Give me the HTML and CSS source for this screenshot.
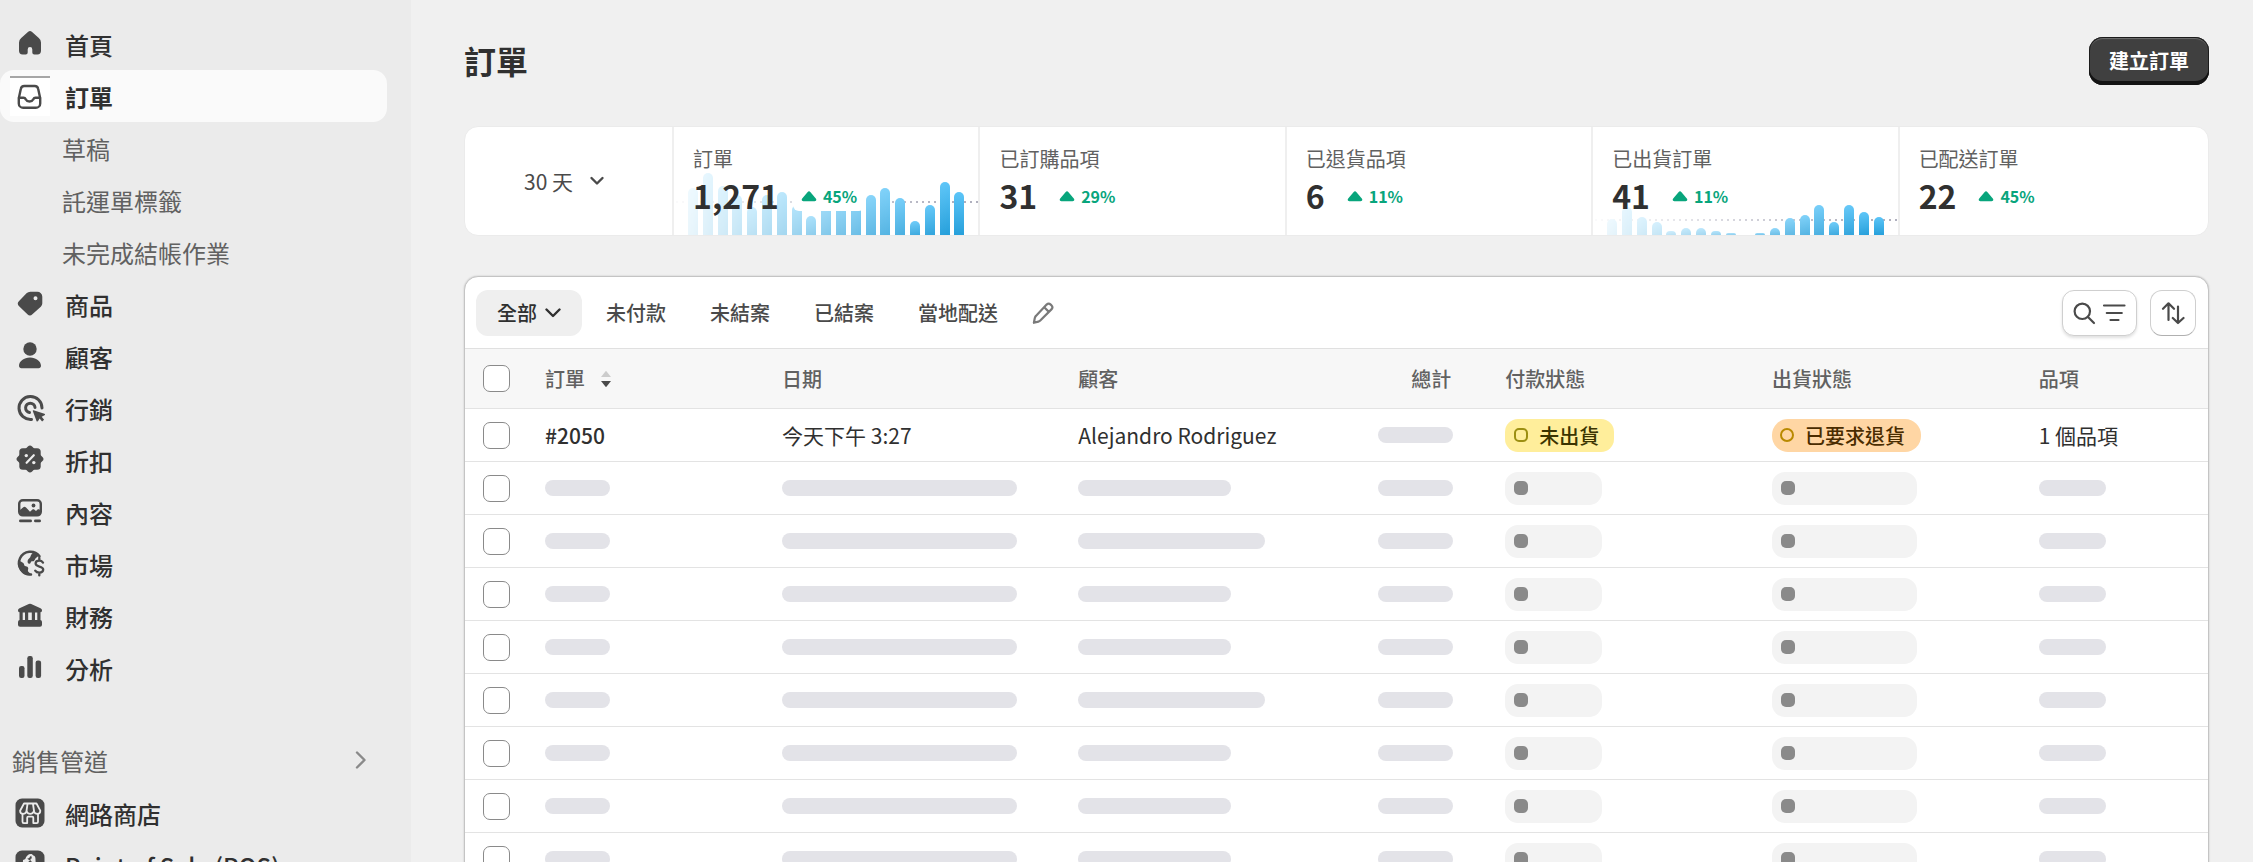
FILE: index.html
```html
<!DOCTYPE html>
<html lang="zh-Hant">
<head>
<meta charset="utf-8">
<title>訂單</title>
<link rel="stylesheet" href="styles.css">
</head>
<body>
<div class="shell">
  <aside class="sidebar">
    <nav>
      <ul class="nav">
        <li><a class="nav-item" href="#"><span class="nav-icon"><svg viewBox="0 0 30 30"><path d="M13.2 3.7a2.8 2.8 0 0 1 3.6 0l7 6.3a6 6 0 0 1 2.2 4.6v8.2a3.6 3.6 0 0 1-3.6 3.6h-3.1a2 2 0 0 1-2-2v-3a2.3 2.3 0 0 0-4.6 0v3a2 2 0 0 1-2 2H7.6A3.6 3.6 0 0 1 4 22.8v-8.2A6 6 0 0 1 6.2 10z"/></svg></span>首頁</a></li>
        <li><a class="nav-item selected" href="#" aria-current="page"><span class="nav-icon"><svg viewBox="0 0 30 30" class="line"><path d="M9.3 4h10.4c1.8 0 3.2 1.2 3.5 3l2 9.2v5.2a4.4 4.4 0 0 1-4.4 4.4H8.2a4.4 4.4 0 0 1-4.4-4.4v-5.2l2-9.2c.3-1.8 1.7-3 3.500-3z"/><path d="M4 15.8h4.600c1.300 0 1.800.8 2.300 1.800.6 1.300 1.700 1.900 3.600 1.900s3-.6 3.600-1.900c.5-1 1-1.800 2.300-1.800H25"/></svg></span>訂單</a>
          <ul class="subnav">
            <li><a href="#">草稿</a></li>
            <li><a href="#">託運單標籤</a></li>
            <li><a href="#">未完成結帳作業</a></li>
          </ul>
        </li>
        <li><a class="nav-item" href="#"><span class="nav-icon"><svg viewBox="0 0 30 30"><path fill-rule="evenodd" d="M15.500 3.700h6.800a5 5 0 0 1 5 5v6.400c0 1.400-.5 2.600-1.500 3.600l-8.400 7.600a3.600 3.600 0 0 1-5 0l-8.300-8a3.600 3.600 0 0 1 0-5.200l7.400-7.800a5.400 5.400 0 0 1 4-1.600zM20.500 8.300a2 2 0 1 0 0 4 2 2 0 0 0 0-4z"/></svg></span>商品</a></li>
        <li><a class="nav-item" href="#"><span class="nav-icon"><svg viewBox="0 0 30 30"><circle cx="15" cy="9" r="6.700"/><path d="M4 25.800C4 21 9 17.400 15 17.400S26 21 26 25.800c0 1.500-1 2.400-2.400 2.400H6.400C5 28.200 4 27.300 4 25.800z"/></svg></span>顧客</a></li>
        <li><a class="nav-item" href="#"><span class="nav-icon"><svg viewBox="0 0 30 30"><g fill="none" stroke="#4a4a4a" stroke-width="3" stroke-linecap="round"><path d="M27 16A11.500 11.500 0 1 0 16.500 27.400"/><path d="M20 15.400A4.700 4.700 0 1 0 14.500 20.500"/></g><path d="M18.600 18.200l10.800 3.500c.9.3.9 1.200.1 1.600l-2.800 1.400 2.400 3.100-2 1.700-2.500-3.100-1.500 2.700c-.4.7-1.400.6-1.600-.2l-3.700-9.900c-.2-.5.3-1 .8-.8z"/></svg></span>行銷</a></li>
        <li><a class="nav-item" href="#"><span class="nav-icon"><svg viewBox="0 0 30 30"><rect x="4.300" y="4.300" width="21.400" height="21.400" rx="3.500"/><rect x="4.700" y="4.700" width="20.600" height="20.600" rx="3" transform="rotate(45 15 15)"/><g class="knock"><circle cx="11.300" cy="11.600" r="1.700"/><circle cx="18.800" cy="18.600" r="1.700"/></g><path class="knock-line" d="M11.600 18.800l7.200-7.600"/></svg></span>折扣</a></li>
        <li><a class="nav-item" href="#"><span class="nav-icon"><svg viewBox="0 0 30 30"><rect x="4.200" y="4.200" width="21.600" height="15.200" rx="3.600" fill="none" stroke="#4a4a4a" stroke-width="2.400"/><path d="M5 14l3-2.600c1-.8 2-.8 3 0l4 4.300 2.200-2c.7-.6 1.600-.6 2.300 0L21 15l1.300-1.200c.8-.6 1.600-.6 2.400 0l.8.700v1.500a3 3 0 0 1-3 3H8a3 3 0 0 1-3-3z"/><circle cx="18.500" cy="9.500" r="1.900"/><rect x="4" y="23.500" width="13" height="2.800" rx="1.400"/><rect x="19" y="23.500" width="7" height="2.800" rx="1.400"/></svg></span>內容</a></li>
        <li><a class="nav-item" href="#"><span class="nav-icon"><svg viewBox="0 0 30 30"><path d="M24.500 8.300A11.400 11.400 0 1 0 16 26.500" fill="none" stroke="#4a4a4a" stroke-width="2.500" stroke-linecap="round"/><path d="M3.500 12c1.500 1.600 3.300 1.700 4.800 3 1 .9.600 2.300 1.700 3.100 1 .7 2.400.4 3 1.400.8 1.300-.4 2.300 0 3.700.4 1.300 2.500 1.600 3.200 3.800C10 28 4 23.500 3.300 17z"/><path d="M19 4l5.500 3-3.800 3.300c-.9.8-.8 2-1.800 2.700-1 .7-1.600-.3-2.600.4-.9.700-.6 2.500-2 2.400-1.500 0-2-2-1.600-3.300.4-1.500 1.800-2 2.500-3.300.8-1.500.5-2.800 3.800-5.200z"/><path d="M28 14.600c-1-1.400-2.300-1.900-3.900-1.900-2 0-3.500 1-3.500 2.900 0 4 7.600 1.900 7.600 6 0 2-1.600 3-3.800 3-1.800 0-3.300-.6-4.200-2M24.300 10v2.600M24.300 24.700v2.700" fill="none" stroke="#4a4a4a" stroke-width="2.300" stroke-linecap="round"/></svg></span>市場</a></li>
        <li><a class="nav-item" href="#"><span class="nav-icon"><svg viewBox="0 0 30 30"><path d="M13.800 4a2.600 2.600 0 0 1 2.400 0l9.300 4.300c1 .5 1.500 1.200 1.500 2.200 0 1.200-.9 2-2 2H5c-1.100 0-2-.8-2-2 0-1 .5-1.700 1.500-2.200zM4.500 12h3.200v9H4.500zM10 12h3.200v9H10zM22.300 12h3.200v9h-3.200zM16.800 12H20v9h-3.200z"/><rect x="3" y="20" width="24" height="6.700" rx="2"/></svg></span>財務</a></li>
        <li><a class="nav-item" href="#"><span class="nav-icon"><svg viewBox="0 0 30 30"><rect x="4" y="14" width="5.500" height="12" rx="2.200"/><rect x="12.300" y="4" width="5.500" height="22" rx="2.200"/><rect x="20.600" y="8.600" width="5.500" height="17.400" rx="2.200"/></svg></span>分析</a></li>
      </ul>
      <button class="section" type="button">銷售管道<svg viewBox="0 0 12 20"><path d="M2 2.500l7.500 7.500L2 17.500"/></svg></button>
      <ul class="nav channels">
        <li><a class="nav-item" href="#"><span class="nav-icon"><svg viewBox="0 0 30 30"><rect x=".5" y=".5" width="29" height="29" rx="6.500"/><g fill="none" stroke="#ebebeb" stroke-width="1.800" stroke-linejoin="round" stroke-linecap="round"><path d="M9 5.500h12.500l3.800 7.200c0 1.900-1.200 3.100-3 3.100-1.700 0-2.900-1.100-3.500-2.500-.6 1.400-1.900 2.500-3.600 2.500s-3-1.100-3.600-2.500c-.6 1.400-1.800 2.500-3.500 2.500-1.800 0-3-1.200-3-3.100z"/><path d="M12.500 6l-1 7M18 6l1 7"/><path d="M7.500 16.500v7.300c0 .8.500 1.300 1.300 1.300h3.400v-5.300c0-.7.400-1.100 1.100-1.100h3.900c.7 0 1.100.4 1.100 1.100v5.300h3.400c.8 0 1.300-.5 1.300-1.300v-7.300"/></g></svg></span>網路商店</a></li>
        <li><a class="nav-item" href="#"><span class="nav-icon"><svg viewBox="0 0 30 30"><rect x=".5" y=".5" width="29" height="29" rx="6.500"/><path class="knock" d="M8 10c1-.4 1.800-.7 2.300-1 .8-3 3-5 5.500-5 1.200 0 2 .7 2.500 1.600 1.200 0 1.900 1.100 2.100 2.300l.8 15.600-13.700 1.500z"/><path d="M22 8l1.800 1.400L25 22l-3 1zM12.200 8.700l2-.7c.3-1 1-1.800 2-2.300l.7 2.500-1.500.8.400 1.700c-1.700 0-2.700 1-2.700 2.300 0 1.800 3 2 3 4.400 0 1.500-1.500 2.200-3.500 1l-.4 1.800c3 1.700 6.200.3 6.200-2.900 0-3-3-3.200-3-4.500 0-.7.800-1 2-.7z"/></svg></span>Point of Sale (POS)</a></li>
      </ul>
    </nav>
  </aside>

  <main class="main">
    <header class="page-head">
      <h1>訂單</h1>
      <button class="primary" type="button">建立訂單</button>
    </header>

    <section class="stats">
      <button class="period" type="button">30 天<svg class="chev" viewBox="0 0 16 16"><path d="M2.500 5l5.500 5.500L13.500 5"/></svg></button>
      <div class="stat">
        <div class="chart avg-high"><i style="height:47px"></i><i style="height:62px"></i><i style="height:49px"></i><i style="height:40px"></i><i style="height:28px"></i><i style="height:40px"></i><i style="height:43px"></i><i style="height:30px"></i><i style="height:19px"></i><i style="height:33px"></i><i style="height:36px"></i><i style="height:38px"></i><i style="height:40px"></i><i style="height:47px"></i><i style="height:37px"></i><i style="height:14px"></i><i style="height:30px"></i><i style="height:53px"></i><i style="height:43px"></i></div>
        <div class="stat-body"><h2>訂單</h2><p><strong>1,271</strong><span class="delta"><svg viewBox="0 0 16 11"><path d="M6.500 1.200a2 2 0 0 1 3 0l5.300 6.300c1 1.300.5 2.800-1.200 2.800H2.400C.7 10.300.2 8.800 1.200 7.500z"/></svg>45%</span></p></div>
      </div>
      <div class="stat">
        <div class="stat-body"><h2>已訂購品項</h2><p><strong>31</strong><span class="delta"><svg viewBox="0 0 16 11"><path d="M6.500 1.200a2 2 0 0 1 3 0l5.300 6.300c1 1.300.5 2.800-1.200 2.800H2.400C.7 10.300.2 8.800 1.200 7.500z"/></svg>29%</span></p></div>
      </div>
      <div class="stat">
        <div class="stat-body"><h2>已退貨品項</h2><p><strong>6</strong><span class="delta"><svg viewBox="0 0 16 11"><path d="M6.500 1.200a2 2 0 0 1 3 0l5.300 6.300c1 1.300.5 2.800-1.200 2.800H2.400C.7 10.300.2 8.800 1.200 7.500z"/></svg>11%</span></p></div>
      </div>
      <div class="stat">
        <div class="chart avg-low"><i style="height:16px"></i><i style="height:28px"></i><i style="height:18px"></i><i style="height:13px"></i><i style="height:4px"></i><i style="height:7px"></i><i style="height:7px"></i><i style="height:4px"></i><i style="height:2px"></i><i style="height:0px"></i><i style="height:2px"></i><i style="height:7px"></i><i style="height:17px"></i><i style="height:20px"></i><i style="height:30px"></i><i style="height:13px"></i><i style="height:30px"></i><i style="height:23px"></i><i style="height:18px"></i></div>
        <div class="stat-body"><h2>已出貨訂單</h2><p><strong>41</strong><span class="delta"><svg viewBox="0 0 16 11"><path d="M6.500 1.200a2 2 0 0 1 3 0l5.300 6.300c1 1.300.5 2.800-1.200 2.800H2.400C.7 10.300.2 8.800 1.200 7.500z"/></svg>11%</span></p></div>
      </div>
      <div class="stat">
        <div class="stat-body"><h2>已配送訂單</h2><p><strong>22</strong><span class="delta"><svg viewBox="0 0 16 11"><path d="M6.500 1.200a2 2 0 0 1 3 0l5.300 6.300c1 1.300.5 2.800-1.200 2.800H2.400C.7 10.300.2 8.800 1.200 7.500z"/></svg>45%</span></p></div>
      </div>
    </section>

    <section class="card">
      <div class="toolbar">
        <div class="tabs">
          <button class="tab active" type="button">全部<svg class="chev" viewBox="0 0 16 16"><path d="M1.500 4.500L8 11l6.500-6.500"/></svg></button>
          <button class="tab" type="button">未付款</button>
          <button class="tab" type="button">未結案</button>
          <button class="tab" type="button">已結案</button>
          <button class="tab" type="button">當地配送</button>
          <button class="edit" type="button" aria-label="編輯"><svg viewBox="0 0 24 24"><path d="M15.600 3.600a2.900 2.900 0 0 1 4.100 0l.7.700a2.900 2.900 0 0 1 0 4.100L9.300 19.500c-.5.500-1.200.9-1.900 1.100L2.900 21.800l.9-4.800c.2-.8.500-1.500 1.100-2.100zM13.200 6.200l4.700 4.700"/></svg></button>
        </div>
        <div class="actions">
          <button class="tool" type="button" aria-label="搜尋和篩選"><svg viewBox="0 0 24 24"><circle cx="10.300" cy="10.300" r="7.700"/><path d="M16 16l6 6"/></svg><svg viewBox="0 0 24 24"><path d="M2 4.500h20.500M4.800 12h15M8.500 19h8"/></svg></button>
          <button class="tool tool-sort" type="button" aria-label="排序"><svg viewBox="0 0 24 24"><path d="M7.500 19V2.500M2 7.800l5.500-5.500 5.500 5.500M17 5.500v16M11.800 17l5.200 5 5.500-5"/></svg></button>
        </div>
      </div>
      <table>
        <colgroup><col class="c-check"><col class="c-order"><col class="c-date"><col class="c-customer"><col class="c-total"><col class="c-status"><col class="c-status"><col></colgroup>
        <thead>
          <tr>
            <th><input type="checkbox" aria-label="全選"></th>
            <th><button class="sort" type="button">訂單<svg viewBox="0 0 12 18"><path class="up" d="M6 .8l5 6.200H1z"/><path d="M1 11h10l-5 6.200z"/></svg></button></th>
            <th>日期</th><th>顧客</th><th class="num">總計</th><th>付款狀態</th><th>出貨狀態</th><th>品項</th>
          </tr>
        </thead>
        <tbody>
          <tr>
            <td><input type="checkbox" aria-label="#2050"></td>
            <td><a class="order" href="#">#2050</a></td>
            <td>今天下午 3:27</td>
            <td>Alejandro Rodriguez</td>
            <td><span class="bone bone-total"></span></td>
            <td><span class="badge yellow">未出貨</span></td>
            <td><span class="badge orange">已要求退貨</span></td>
            <td>1 個品項</td>
          </tr>
          <tr><td><input type="checkbox" aria-label="選取"></td><td><span class="bone bone-order"></span></td><td><span class="bone bone-date"></span></td><td><span class="bone bone-name"></span></td><td><span class="bone bone-total"></span></td><td><span class="badge blank"></span></td><td><span class="badge blank wide"></span></td><td><span class="bone bone-items"></span></td></tr>
          <tr><td><input type="checkbox" aria-label="選取"></td><td><span class="bone bone-order"></span></td><td><span class="bone bone-date"></span></td><td><span class="bone bone-name long"></span></td><td><span class="bone bone-total"></span></td><td><span class="badge blank"></span></td><td><span class="badge blank wide"></span></td><td><span class="bone bone-items"></span></td></tr>
          <tr><td><input type="checkbox" aria-label="選取"></td><td><span class="bone bone-order"></span></td><td><span class="bone bone-date"></span></td><td><span class="bone bone-name"></span></td><td><span class="bone bone-total"></span></td><td><span class="badge blank"></span></td><td><span class="badge blank wide"></span></td><td><span class="bone bone-items"></span></td></tr>
          <tr><td><input type="checkbox" aria-label="選取"></td><td><span class="bone bone-order"></span></td><td><span class="bone bone-date"></span></td><td><span class="bone bone-name"></span></td><td><span class="bone bone-total"></span></td><td><span class="badge blank"></span></td><td><span class="badge blank wide"></span></td><td><span class="bone bone-items"></span></td></tr>
          <tr><td><input type="checkbox" aria-label="選取"></td><td><span class="bone bone-order"></span></td><td><span class="bone bone-date"></span></td><td><span class="bone bone-name long"></span></td><td><span class="bone bone-total"></span></td><td><span class="badge blank"></span></td><td><span class="badge blank wide"></span></td><td><span class="bone bone-items"></span></td></tr>
          <tr><td><input type="checkbox" aria-label="選取"></td><td><span class="bone bone-order"></span></td><td><span class="bone bone-date"></span></td><td><span class="bone bone-name"></span></td><td><span class="bone bone-total"></span></td><td><span class="badge blank"></span></td><td><span class="badge blank wide"></span></td><td><span class="bone bone-items"></span></td></tr>
          <tr><td><input type="checkbox" aria-label="選取"></td><td><span class="bone bone-order"></span></td><td><span class="bone bone-date"></span></td><td><span class="bone bone-name"></span></td><td><span class="bone bone-total"></span></td><td><span class="badge blank"></span></td><td><span class="badge blank wide"></span></td><td><span class="bone bone-items"></span></td></tr>
          <tr><td><input type="checkbox" aria-label="選取"></td><td><span class="bone bone-order"></span></td><td><span class="bone bone-date"></span></td><td><span class="bone bone-name"></span></td><td><span class="bone bone-total"></span></td><td><span class="badge blank"></span></td><td><span class="badge blank wide"></span></td><td><span class="bone bone-items"></span></td></tr>
        </tbody>
      </table>
    </section>
  </main>
</div>
</body>
</html>
```

FILE: styles.css
```css
*, *::before { box-sizing: border-box; }

body {
  margin: 0;
  background: #f0f0f0;
  color: #303030;
  font-family: "Noto Sans CJK TC", "Noto Sans", sans-serif;
  font-size: 21px;
}

button {
  border: 0;
  padding: 0;
  background: none;
  color: inherit;
  font: inherit;
}

a { color: inherit; text-decoration: none; }
ul { margin: 0; padding: 0; list-style: none; }
h1, h2, p { margin: 0; }
svg { display: block; flex: none; }

.shell {
  display: flex;
  height: 100vh;
  overflow: hidden;
}

/* Sidebar */
.sidebar {
  flex: 0 0 411px;
  padding-top: 18px;
  background: #ebebeb;
  overflow: hidden;
}

.nav-item {
  display: flex;
  align-items: center;
  gap: 15px;
  height: 52px;
  margin-right: 24px;
  padding-left: 10px;
  border-radius: 14px;
  font-size: 24px;
  font-weight: 500;
}

.nav-icon {
  display: flex;
  justify-content: center;
  width: 40px;
  height: 40px;
  padding-top: 4px;
}

.nav-icon svg { width: 30px; height: 30px; fill: #4a4a4a; }
.nav-icon svg.line { fill: none; stroke: #4a4a4a; stroke-width: 2.4; stroke-linejoin: round; stroke-linecap: round; }
.nav-icon .knock { fill: #ebebeb; }
.nav-icon .knock-line { stroke: #ebebeb; stroke-width: 2.2; stroke-linecap: round; }

.selected { background: #fafafa; font-weight: 700; }
.selected .nav-icon { background: #fff; border-top: 2px solid #a6a6a6; }

.subnav a {
  display: flex;
  align-items: center;
  height: 52px;
  padding-left: 62px;
  color: #616161;
  font-size: 24px;
}

.section {
  display: flex;
  align-items: center;
  justify-content: space-between;
  width: 100%;
  height: 54px;
  margin-top: 39px;
  padding: 0 44px 0 12px;
  color: #616161;
  font-size: 24px;
}

.section svg { width: 12px; height: 20px; fill: none; stroke: #8a8a8a; stroke-width: 2.4; stroke-linecap: round; stroke-linejoin: round; }

.channels .nav-icon { padding-top: 5px; }

/* Page */
.main {
  flex: 1;
  min-width: 0;
  padding: 37px 44px 0 53px;
}

.page-head {
  display: flex;
  align-items: center;
  justify-content: space-between;
  height: 48px;
}

h1 { padding-bottom: 2px; font-size: 32px; font-weight: 700; line-height: 46px; }

.primary {
  height: 48px;
  padding: 0 20px 1px;
  border-radius: 14px;
  background: #404040;
  box-shadow: inset 0 -4px 0 #141414, inset 0 0 0 1px #1c1c1c, inset 0 2px 1px #707070;
  color: #fff;
  font-size: 20px;
  font-weight: 700;
}

/* Statistics */
.stats {
  display: flex;
  height: 110px;
  margin-top: 41px;
  border: 1px solid #ebebeb;
  border-radius: 14px;
  background: #fff;
  overflow: hidden;
}

.period {
  display: flex;
  align-items: center;
  justify-content: center;
  gap: 16px;
  flex: 0 0 207px;
  padding-right: 8px;
  color: #4a4a4a;
}

.chev {
  width: 16px;
  height: 16px;
  fill: none;
  stroke: #4a4a4a;
  stroke-width: 2.4;
  stroke-linecap: round;
  stroke-linejoin: round;
}

.stat {
  display: grid;
  flex: 1 1 0;
  border-left: 2px solid #efefef;
}

.stat:last-child { flex-basis: 6px; }

.stat > * { grid-area: 1 / 1; }

.stat-body { position: relative; padding: 18px 19px 0; }

.stat h2 {
  color: #616161;
  font-size: 20px;
  font-weight: 400;
  line-height: 28px;
}

.stat p { display: flex; align-items: center; gap: 14px; height: 44px; }
.stat strong { font-size: 32px; font-weight: 700; line-height: 44px; }

.delta {
  display: flex;
  align-items: center;
  gap: 6px;
  height: 30px;
  margin-top: 2px;
  padding: 0 8px;
  border-radius: 6px;
  background: #fff;
  color: #08a57c;
  font-size: 16px;
  font-weight: 700;
}

.delta svg { width: 16px; height: 11px; fill: currentColor; }

.chart {
  display: flex;
  align-items: flex-end;
  justify-content: space-between;
  padding: 0 14px;
  background: radial-gradient(circle, #b0b0be 1px, transparent 1px) 0 0 / 6px 4px repeat-x;
  -webkit-mask-image: linear-gradient(90deg, rgba(0, 0, 0, 0.05), rgba(0, 0, 0, 0.35) 30%, #000 90%);
  mask-image: linear-gradient(90deg, rgba(0, 0, 0, 0.05), rgba(0, 0, 0, 0.35) 30%, #000 90%);
}

.avg-high { background-position: 0 73px; }
.avg-low { background-position: 0 91px; }

.chart i {
  width: 10px;
  border-radius: 5px 5px 0 0;
  background: linear-gradient(#5cc5f8, #27a0db);
}

/* Order list */
.card {
  margin-top: 40px;
  border: 1px solid #c4c4c4;
  border-radius: 14px 14px 0 0;
  background: #fff;
  box-shadow: 0 0 2px rgba(0, 0, 0, 0.2);
  overflow: hidden;
}

.toolbar {
  display: flex;
  align-items: center;
  justify-content: space-between;
  height: 71px;
  padding: 0 12px 0 11px;
}

.tabs, .actions { display: flex; align-items: center; }
.actions { gap: 13px; }

.tab {
  display: flex;
  align-items: center;
  gap: 8px;
  height: 46px;
  padding: 0 22px;
  border-radius: 12px;
  color: #4a4a4a;
  font-size: 20px;
  font-weight: 500;
}

.tab.active { margin-right: 2px; padding: 0 21px; background: #efefef; color: #303030; }
.active .chev { stroke: #303030; }
.edit { margin-left: 11px; }

.edit svg, .tool svg {
  width: 24px;
  height: 24px;
  fill: none;
  stroke: #4a4a4a;
  stroke-width: 2.2;
  stroke-linecap: round;
  stroke-linejoin: round;
}

.edit svg { stroke: #7a7a7a; }

.tool {
  display: flex;
  align-items: center;
  gap: 6px;
  height: 46px;
  padding: 0 10px 0 9px;
  border: 1px solid #cfcfcf;
  border-radius: 12px;
  background: #fff;
  box-shadow: 0 2px 3px rgba(0, 0, 0, 0.12);
}

.tool-sort { padding: 0 10px; border-bottom-color: #b0b0b0; box-shadow: none; }

table {
  width: 100%;
  border-collapse: separate;
  border-spacing: 0;
  table-layout: fixed;
}

.c-check { width: 80px; }
.c-order { width: 13.6%; }
.c-date { width: 17%; }
.c-customer { width: 17.2%; }
.c-total { width: 7.3%; }
.c-status { width: 15.3%; }

th {
  height: 61px;
  padding: 0;
  border-top: 1px solid #e0e0e0;
  border-bottom: 1px solid #e3e3e3;
  background: #f7f7f7;
  color: #616161;
  font-size: 20px;
  font-weight: 500;
  text-align: left;
}

th.num { padding-right: 54px; text-align: right; }

td {
  height: 53px;
  padding: 0;
  border-bottom: 1px solid #e3e3e3;
  white-space: nowrap;
}

th:first-child, td:first-child { padding-left: 18px; }

input[type="checkbox"] {
  display: block;
  appearance: none;
  width: 27px;
  height: 27px;
  margin: 0;
  border: 1px solid #8a8a8a;
  border-radius: 7px;
  background: #fff;
}

.sort { display: flex; align-items: center; gap: 15px; }
.sort svg { width: 12px; height: 18px; fill: #4a4a4a; }
.sort .up { fill: #cccccc; }

.order { font-weight: 500; }

.bone {
  display: block;
  height: 16px;
  border-radius: 8px;
  background: #e3e3e8;
}

.bone-order { width: 65px; }
.bone-date { width: 235px; }
.bone-name { width: 153px; }
.bone-name.long { width: 187px; }
.bone-total { width: 75px; }
.bone-items { width: 67px; }

.badge {
  display: flex;
  align-items: center;
  gap: 11px;
  width: fit-content;
  height: 33px;
  padding: 0 15px 0 9px;
  border-radius: 13px;
  font-size: 20px;
  font-weight: 500;
}

.badge::before {
  content: "";
  width: 14px;
  height: 14px;
  border: 2px solid #9c8f12;
  border-radius: 5px;
}

.yellow { background: #ffee9b; color: #3b3400; }

.orange {
  padding: 0 16px 0 8px;
  border-radius: 16px;
  background: #ffd6a4;
  color: #4a2c00;
}

.orange::before { border-color: #b98900; border-radius: 7px; }

.blank { width: 97px; background: #f3f3f3; }
.blank.wide { width: 145px; }
.blank::before { border: 0; background: #8a8a8a; }
```
